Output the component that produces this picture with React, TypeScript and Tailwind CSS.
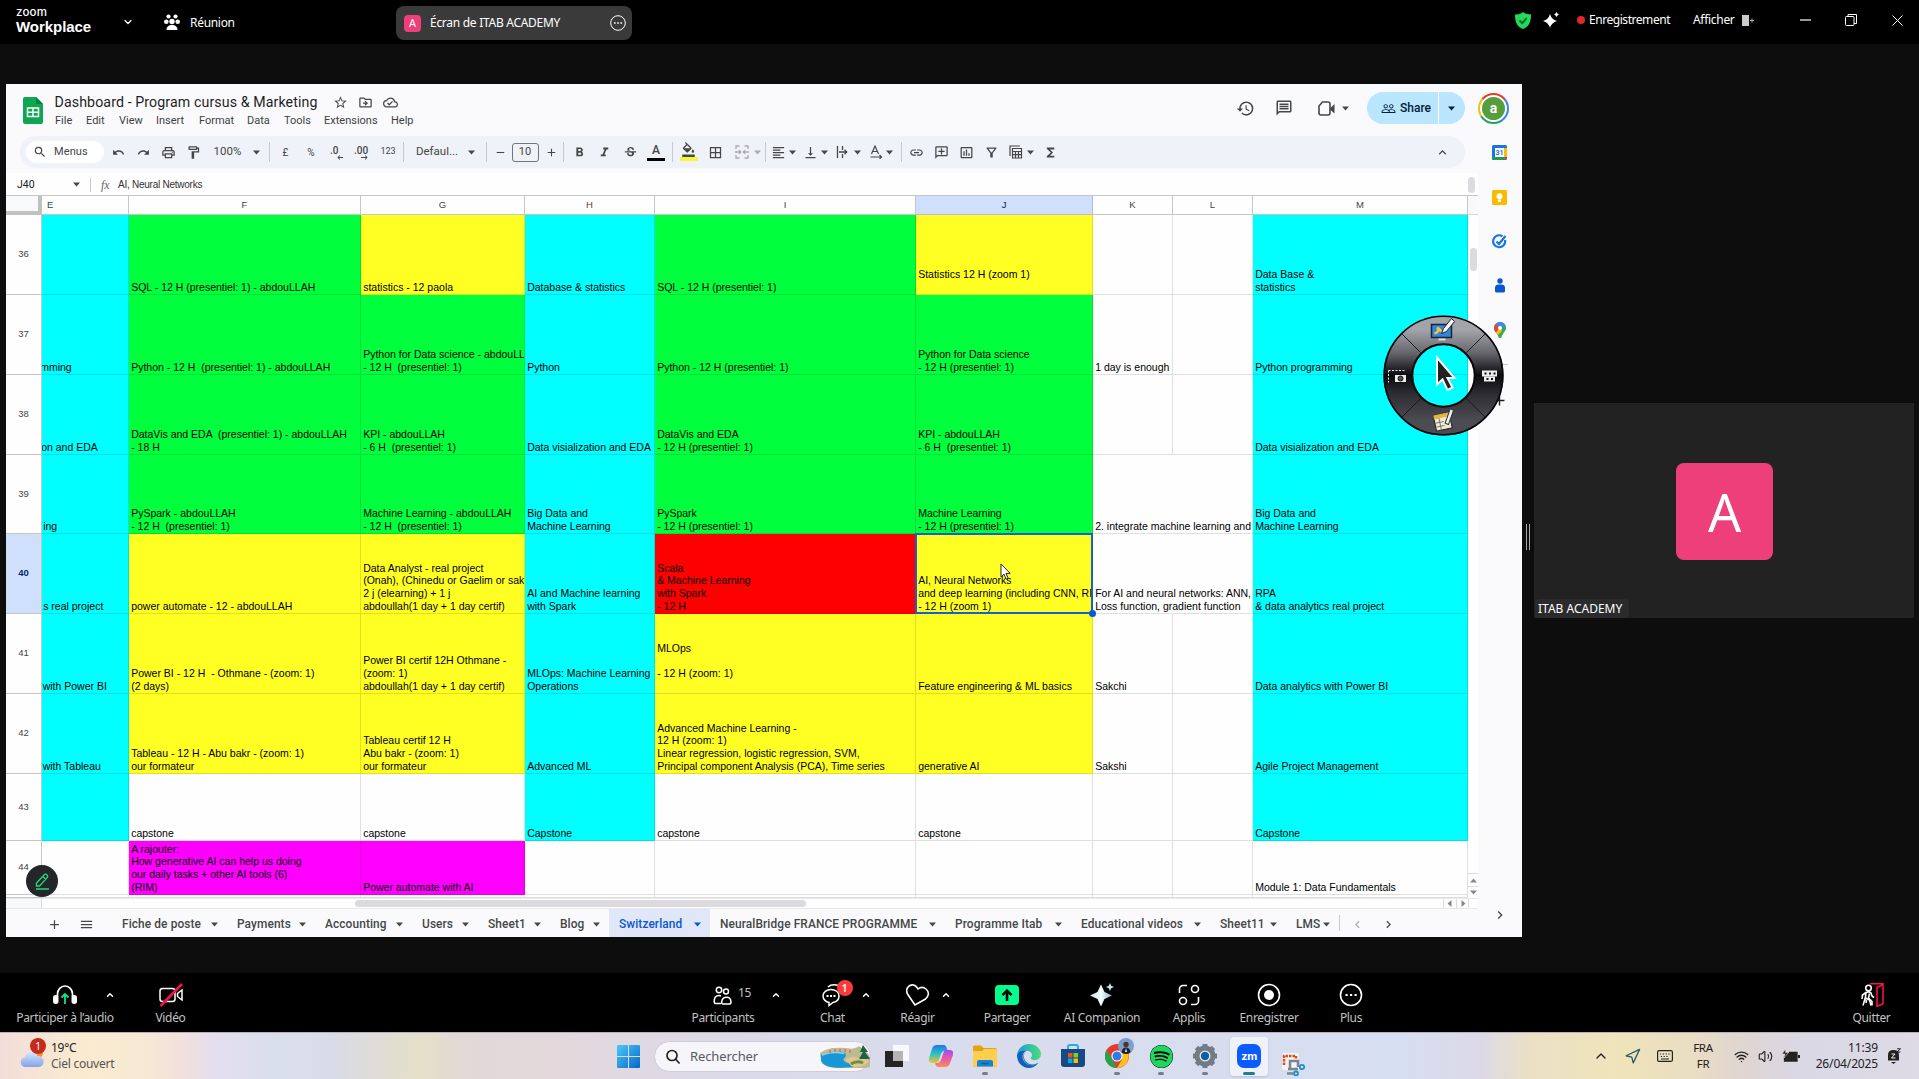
import React from "react";
import {
  MdSearch, MdUndo, MdRedo, MdOutlinePrint, MdOutlineFormatPaint, MdRemove, MdAdd,
  MdFormatBold, MdFormatItalic, MdStrikethroughS, MdFormatColorFill, MdBorderAll, MdFormatAlignLeft,
  MdVerticalAlignBottom, MdLink, MdOutlineAddComment, MdInsertChartOutlined, MdOutlineFilterAlt,
  MdFunctions, MdStarBorder, MdOutlineDriveFileMove, MdOutlineCloudDone, MdHistory, MdOutlineComment,
  MdPeopleOutline, MdMenu, MdChevronLeft, MdChevronRight, MdKeyboardArrowUp,
} from "react-icons/md";
import { FaSpotify } from "react-icons/fa";
import { ChevronDown, ChevronUp, Wifi, Volume2, Navigation } from "lucide-react";

type Kids = { children?: React.ReactNode };

const C = "bg-[#00ffff]";
const G = "bg-[#00ff3c]";
const Y = "bg-[#ffff24]";
const R = "bg-[#ff0000]";
const P = "bg-[#ff00ff]";
const W = "bg-[#fefefe]";

type CellData = { t?: string; bg: string; shift?: string; open?: boolean; selected?: boolean };
type RowData = { n: string; h: string; cells: CellData[] };

const rows: RowData[] = [
  { n: "36", h: "h-[80px]", cells: [
    { bg: C }, { bg: G, t: "SQL - 12 H (presentiel: 1) - abdouLLAH" }, { bg: Y, t: "statistics - 12 paola" },
    { bg: C, t: "Database & statistics" }, { bg: G, t: "SQL - 12 H (presentiel: 1)" },
    { bg: Y, t: "Statistics 12 H (zoom 1)\n " }, { bg: W }, { bg: W }, { bg: C, t: "Data Base &\nstatistics" } ] },
  { n: "37", h: "h-[80px]", cells: [
    { bg: C, t: "mming", shift: "-ml-[4px]" }, { bg: G, t: "Python - 12 H  (presentiel: 1) - abdouLLAH" },
    { bg: G, t: "Python for Data science - abdouLL\n- 12 H  (presentiel: 1)" }, { bg: C, t: "Python" },
    { bg: G, t: "Python - 12 H (presentiel: 1)" }, { bg: G, t: "Python for Data science\n- 12 H (presentiel: 1)" },
    { bg: W, t: "1 day is enough" }, { bg: W }, { bg: C, t: "Python programming" } ] },
  { n: "38", h: "h-[80px]", cells: [
    { bg: C, t: "on and EDA", shift: "-ml-[3px]" }, { bg: G, t: "DataVis and EDA  (presentiel: 1) - abdouLLAH\n- 18 H" },
    { bg: G, t: "KPI - abdouLLAH\n- 6 H  (presentiel: 1)" }, { bg: C, t: "Data visialization and EDA" },
    { bg: G, t: "DataVis and EDA\n- 12 H (presentiel: 1)" }, { bg: G, t: "KPI - abdouLLAH\n- 6 H  (presentiel: 1)" },
    { bg: W }, { bg: W }, { bg: C, t: "Data visialization and EDA" } ] },
  { n: "39", h: "h-[79px]", cells: [
    { bg: C, t: "ing", shift: "-ml-[1px]" }, { bg: G, t: "PySpark - abdouLLAH\n- 12 H  (presentiel: 1)" },
    { bg: G, t: "Machine Learning - abdouLLAH\n- 12 H  (presentiel: 1)" }, { bg: C, t: "Big Data and\nMachine Learning" },
    { bg: G, t: "PySpark\n- 12 H (presentiel: 1)" }, { bg: G, t: "Machine Learning\n- 12 H (presentiel: 1)" },
    { bg: W, t: "2. integrate machine learning and", open: true }, { bg: W }, { bg: C, t: "Big Data and\nMachine Learning" } ] },
  { n: "40", h: "h-[80px]", cells: [
    { bg: C, t: "s real project", shift: "-ml-[1px]" }, { bg: Y, t: "power automate - 12 - abdouLLAH" },
    { bg: Y, t: "Data Analyst - real project\n(Onah), (Chinedu or Gaelim or sak\n2 j (elearning) + 1 j\nabdoullah(1 day + 1 day certif)" },
    { bg: C, t: "AI and Machine learning\nwith Spark" }, { bg: R, t: "Scala\n& Machine Learning\nwith Spark\n- 12 H" },
    { bg: Y, t: "AI, Neural Networks\nand deep learning (including CNN, RN\n- 12 H (zoom 1)", selected: true },
    { bg: W, t: "For AI and neural networks: ANN,\nLoss function, gradient function", open: true }, { bg: W },
    { bg: C, t: "RPA\n& data analytics real project" } ] },
  { n: "41", h: "h-[80px]", cells: [
    { bg: C, t: "with Power BI", shift: "-ml-[1.5px]" }, { bg: Y, t: "Power BI - 12 H  - Othmane - (zoom: 1)\n(2 days)" },
    { bg: Y, t: "Power BI certif 12H Othmane -\n(zoom: 1)\nabdoullah(1 day + 1 day certif)" },
    { bg: C, t: "MLOps: Machine Learning\nOperations" }, { bg: Y, t: "MLOps\n \n- 12 H (zoom: 1)\n " },
    { bg: Y, t: "Feature engineering & ML basics" }, { bg: W, t: "Sakchi" }, { bg: W }, { bg: C, t: "Data analytics with Power BI" } ] },
  { n: "42", h: "h-[80px]", cells: [
    { bg: C, t: "with Tableau", shift: "-ml-[1.5px]" }, { bg: Y, t: "Tableau - 12 H - Abu bakr - (zoom: 1)\nour formateur" },
    { bg: Y, t: "Tableau certif 12 H\nAbu bakr - (zoom: 1)\nour formateur" }, { bg: C, t: "Advanced ML" },
    { bg: Y, t: "Advanced Machine Learning -\n12 H (zoom: 1)\nLinear regression, logistic regression, SVM,\nPrincipal component Analysis (PCA), Time series" },
    { bg: Y, t: "generative AI" }, { bg: W, t: "Sakshi" }, { bg: W }, { bg: C, t: "Agile Project Management" } ] },
  { n: "43", h: "h-[67px]", cells: [
    { bg: C }, { bg: W, t: "capstone" }, { bg: W, t: "capstone" }, { bg: C, t: "Capstone" }, { bg: W, t: "capstone" },
    { bg: W, t: "capstone" }, { bg: W }, { bg: W }, { bg: C, t: "Capstone" } ] },
  { n: "44", h: "h-[54px]", cells: [
    { bg: W }, { bg: P, t: "A rajouter:\nHow generative AI can help us doing\nour daily tasks + other AI tools (6)\n(RIM)" },
    { bg: P, t: "Power automate with AI" }, { bg: W }, { bg: W }, { bg: W }, { bg: W }, { bg: W }, { bg: W, t: "Module 1: Data Fundamentals" } ] },
  { n: "", h: "h-[3px]", cells: [
    { bg: W }, { bg: W }, { bg: W }, { bg: W }, { bg: W }, { bg: W }, { bg: W }, { bg: W }, { bg: W } ] },
];

const GRID = "grid grid-cols-[36px_87px_232px_164px_130px_261px_177px_80px_80px_215px]";

function Cell({ c }: { c: CellData }) {
  const z = c.selected ? "z-20" : c.open ? "z-10" : "overflow-hidden";
  const line = c.open ? "border-r-transparent" : "border-r-black/12";
  return (
    <div className={`relative flex min-w-0 items-end border-r border-b border-b-black/12 pb-[0.6px] pl-[2.2px] ${c.bg} ${z} ${line}`}>
      {c.t && (
        <div className={`whitespace-pre text-[10.5px] leading-[12.67px] text-black ${c.shift ?? ""} ${c.selected ? "w-[173px] overflow-hidden" : ""}`}>{c.t}</div>
      )}
      {c.selected && (
        <>
          <div className="absolute -top-px -right-px -bottom-px -left-px border-2 border-[#1660cf]" />
          <div className="absolute -right-1 -bottom-1 size-[7px] rounded-full bg-[#0b57d0]" />
          <svg className="absolute top-[29px] left-[84px] h-[18px] w-3" viewBox="0 0 12 18">
            <path d="M1 1v13l3-2.8 2.2 5 2-.9-2.2-4.9h4.2z" fill="#fff" stroke="#222" strokeWidth="1" />
          </svg>
        </>
      )}
    </div>
  );
}

function Spreadsheet() {
  return (
    <div className="w-[1462px] font-['Liberation_Sans',Arial,sans-serif]">
      <div className={`${GRID} h-5 border-t border-[#c4c7c5] text-center text-[9.5px] leading-[18px] text-[#444]`}>
        <div className="border-r-4 border-b-4 border-[#c0c0c1] bg-[#f8f9fa]" />
        <div className="border-r border-b border-[#c4c7c5] pl-[5px] text-left">E</div>
        {["F", "G", "H", "I"].map((l) => <div key={l} className="border-r border-b border-[#c4c7c5]">{l}</div>)}
        <div className="border-r border-b border-[#b9b4e0] bg-[#cfe0fc] text-[#041e49]">J</div>
        {["K", "L", "M"].map((l) => <div key={l} className="border-r border-b border-[#c4c7c5]">{l}</div>)}
      </div>
      {rows.map((r, i) => (
        <div key={i} className={`${GRID} ${r.h}`}>
          <div className={`flex items-center justify-center border-r border-b border-[#c4c7c5] text-[9.5px] ${r.n === "40" ? "bg-[#cfe0fc] font-bold text-[#0a2a66]" : "bg-[#fefefe] text-[#444]"}`}>{r.n}</div>
          {r.cells.map((c, j) => <Cell key={j} c={c} />)}
        </div>
      ))}
    </div>
  );
}

const Tri = ({ className = "" }: { className?: string }) => (
  <svg className={`h-[5px] w-[7px] shrink-0 ${className}`} viewBox="0 0 7 5"><path d="M0 .5h7L3.5 4.5z" fill="currentColor" /></svg>
);

const Slot = ({ w, children }: { w: string } & Kids) => (
  <div className={`flex h-full shrink-0 items-center justify-center ${w}`}>{children}</div>
);

const Sep = () => <div className="h-5 w-px bg-[#c7c9cc]" />;

function Toolbar() {
  return (
    <div className="ml-[14px] flex h-8 w-[1445px] items-center rounded-full bg-[#eff2f9] pl-[6px] text-[11px] text-[#444746]">
      <div className="flex h-[22px] w-[78px] items-center rounded-full bg-white pl-[7px]">
        <MdSearch className="size-[14px]" />
        <span className="ml-[7px] text-[11px] tracking-[0.1px]">Menus</span>
      </div>
      <Slot w="w-[27px]"><MdUndo className="ml-[1px] size-[13px]" /></Slot>
      <Slot w="w-[25px]"><MdRedo className="size-[13px]" /></Slot>
      <Slot w="w-[25px]"><MdOutlinePrint className="size-[15px]" /></Slot>
      <Slot w="w-[25px]"><MdOutlineFormatPaint className="size-[15px]" /></Slot>
      <Slot w="w-[43px]"><span className="text-[11.5px]">100%</span></Slot>
      <Slot w="w-[14px]"><Tri /></Slot>
      <Slot w="w-[13px]"><Sep /></Slot>
      <Slot w="w-[19px]"><span className="text-[10px]">£</span></Slot>
      <Slot w="w-[32px]"><span className="text-[10px]">%</span></Slot>
      <Slot w="w-[19px]">
        <svg className="size-4" viewBox="0 0 16 16"><text x="1" y="10" fontSize="10" fontWeight="500" fill="currentColor">.0</text><path d="M14 13.5H9m2-2-2.2 2L11 15.5" stroke="currentColor" fill="none" /></svg>
      </Slot>
      <Slot w="w-[31px]">
        <svg className="h-4 w-[18px]" viewBox="0 0 18 16"><text x="1" y="10" fontSize="10" fontWeight="500" fill="currentColor">.00</text><path d="M8 13.5h6m-2-2 2.2 2L12 15.5" stroke="currentColor" fill="none" /></svg>
      </Slot>
      <Slot w="w-[22px]"><span className="text-[9px]">123</span></Slot>
      <Slot w="w-[9px]"><Sep /></Slot>
      <Slot w="w-[58px]"><span className="text-[11.5px]">Defaul...</span></Slot>
      <Slot w="w-[14px]"><Tri className="mr-[3px]" /></Slot>
      <Slot w="w-[13px]"><Sep /></Slot>
      <Slot w="w-[14px]"><MdRemove className="size-[13px]" /></Slot>
      <Slot w="w-[36px]"><div className="flex h-[19px] w-[27px] items-center justify-center rounded-[3px] border border-[#747775]">10</div></Slot>
      <Slot w="w-[16px]"><MdAdd className="size-[13px]" /></Slot>
      <Slot w="w-[9px]"><Sep /></Slot>
      <Slot w="w-[22px]"><MdFormatBold className="size-[15px]" /></Slot>
      <Slot w="w-[28px]"><MdFormatItalic className="size-[15px]" /></Slot>
      <Slot w="w-[24px]"><MdStrikethroughS className="size-[15px]" /></Slot>
      <Slot w="w-[28px]">
        <div className="flex flex-col items-center"><span className="text-[12px] leading-[12px] font-medium">A</span><div className="mt-[2px] h-[3px] w-[18px] bg-black" /></div>
      </Slot>
      <Slot w="w-[4px]"><Sep /></Slot>
      <Slot w="w-[29px]">
        <div className="-mt-[2px] flex flex-col items-center"><MdFormatColorFill className="size-[15px]" /><div className="h-[4px] w-[18px] bg-[#f6f63a]" /></div>
      </Slot>
      <Slot w="w-[25px]"><MdBorderAll className="size-[15px]" /></Slot>
      <Slot w="w-[27px]">
        <svg className="size-[14px] text-[#a9abae]" viewBox="0 0 14 14" fill="none" stroke="currentColor" strokeWidth="1.3"><path d="M4.5 1H1v3m3.500 9H1v-3M9.500 1H13v3M9.500 13H13v-3M0 7h5.500M4 5.300 5.700 7 4 8.700M14 7H8.500M10 5.300 8.300 7 10 8.700" /></svg>
      </Slot>
      <Slot w="w-[4px]"><Tri className="text-[#a9abae]" /></Slot>
      <Slot w="w-[12px]"><Sep /></Slot>
      <Slot w="w-[14px]"><MdFormatAlignLeft className="size-[15px] shrink-0" /></Slot>
      <Slot w="w-[15px]"><Tri /></Slot>
      <Slot w="w-[20px]"><MdVerticalAlignBottom className="size-[15px]" /></Slot>
      <Slot w="w-[9px]"><Tri /></Slot>
      <Slot w="w-[26px]">
        <svg className="size-[14px]" viewBox="0 0 14 14" fill="none" stroke="currentColor" strokeWidth="1.3"><path d="M2.5 1v12M7.500 1v4M7.500 9v4M4 7h7.500M9.500 4.800 11.700 7 9.500 9.200" /></svg>
      </Slot>
      <Slot w="w-[5px]"><Tri /></Slot>
      <Slot w="w-[31px]">
        <svg className="size-[14px]" viewBox="0 0 14 14" fill="none" stroke="currentColor" strokeWidth="1.2"><path d="M2.500 9 6 1l3.500 8M3.700 6.500h4.600M1.500 12h11M10.500 10l2 2-2 2" /></svg>
      </Slot>
      <Slot w="w-[2px]"><Tri className="-ml-[5px]" /></Slot>
      <Slot w="w-[16px]"><Sep /></Slot>
      <Slot w="w-[14px]"><MdLink className="size-[15px] shrink-0" /></Slot>
      <Slot w="w-[36px]"><MdOutlineAddComment className="size-[15px] -scale-x-100" /></Slot>
      <Slot w="w-[14px]"><MdInsertChartOutlined className="size-[15px] shrink-0" /></Slot>
      <Slot w="w-[37px]"><MdOutlineFilterAlt className="size-[15px]" /></Slot>
      <Slot w="w-[11px]">
        <svg className="size-[14px] shrink-0" viewBox="0 0 14 14" fill="none" stroke="currentColor" strokeWidth="1.2"><path d="M1 11V1h10M3.500 3.500h9v9.500h-9zM3.500 6.500h9M3.500 9.700h9M6.500 6.500V13M9.500 6.500V13" /></svg>
      </Slot>
      <Slot w="w-[18px]"><Tri /></Slot>
      <Slot w="w-[22px]"><MdFunctions className="size-[15px]" /></Slot>
      <div className="flex-1" />
      <MdKeyboardArrowUp className="mr-[15px] size-[15px]" />
    </div>
  );
}

function TitleBar() {
  return (
    <div className="flex h-[52px] pl-[17px] text-[#1f1f1f]">
      <svg className="mt-[13px] h-[27px] w-5" viewBox="0 0 20 27">
        <path d="M2 0h11l7 7v18a2 2 0 0 1-2 2H2a2 2 0 0 1-2-2V2a2 2 0 0 1 2-2z" fill="#0da750" /><path d="M13 0l7 7h-7z" fill="#06833b" />
        <path d="M4.500 11h11v8.500h-11zM10 11v8.500M4.500 15.200h11" fill="none" stroke="#fff" strokeWidth="1.500" />
      </svg>
      <div className="ml-[11.500px] w-[900px] pt-[9px]">
        <div className="flex h-[19px] items-center">
          <span className="w-[278px] text-[14.2px] tracking-[0.1px] whitespace-nowrap">Dashboard - Program cursus &amp; Marketing</span>
          <div className="flex gap-[10px] text-[#444746]">
            <MdStarBorder className="size-[15px]" /><MdOutlineDriveFileMove className="size-[15px]" /><MdOutlineCloudDone className="size-[15px]" />
          </div>
        </div>
        <div className="flex h-[18px] items-center pt-px pl-[0.5px] text-[11px] text-[#3c3f3e]">
          <span className="w-[31px]">File</span><span className="w-[33px]">Edit</span><span className="w-[37px]">View</span>
          <span className="w-[43px]">Insert</span><span className="w-[48px]">Format</span><span className="w-[37px]">Data</span>
          <span className="w-[40px]">Tools</span><span className="w-[67px]">Extensions</span><span>Help</span>
        </div>
      </div>
      <div className="ml-auto flex h-12 items-center text-[#444746]">
        <MdHistory className="size-[19px]" />
        <MdOutlineComment className="ml-5 size-[18px] -scale-x-100" />
        <svg className="ml-[24px] size-[19px]" viewBox="0 0 19 19"><path d="M5.500 3H11q2 0 2 2v9q0 2-2 2H4q-2 0-2-2V7z" fill="none" stroke="currentColor" strokeWidth="1.6" /><path d="M13 9.500 17.500 5v9.500L13 10.500z" fill="currentColor" /></svg>
        <Tri className="ml-[6px]" />
        <div className="ml-[18px] flex h-8 w-[98px] items-center rounded-full bg-[#b9e5fd] text-[#001d35]">
          <MdPeopleOutline className="ml-[14px] size-[15px]" />
          <span className="ml-[4px] w-[38px] text-[12px] font-medium">Share</span>
          <div className="h-8 w-px bg-white" /><Tri className="ml-[9px]" />
        </div>
        <div className="mr-[13px] ml-[13px] flex size-[31px] items-center justify-center rounded-full bg-[conic-gradient(from_-50deg,#e33b2e_0_28%,#3b82f6_28%_55%,#1fa463_55%_80%,#f9bc15_80%)]">
          <div className="flex size-[27px] items-center justify-center rounded-full border-2 border-white bg-[#569d3c] text-[14px] font-bold text-white">a</div>
        </div>
      </div>
    </div>
  );
}

const tabs: { t: string; w: string; on?: boolean }[] = [
  { t: "Fiche de poste", w: "w-[115px]" }, { t: "Payments", w: "w-[88px]" }, { t: "Accounting", w: "w-[97px]" },
  { t: "Users", w: "w-[66px]" }, { t: "Sheet1", w: "w-[72px]" }, { t: "Blog", w: "w-[59px]" },
  { t: "Switzerland", w: "w-[101px]", on: true }, { t: "NeuralBridge FRANCE PROGRAMME", w: "w-[235px]" },
  { t: "Programme Itab", w: "w-[126px]" }, { t: "Educational videos", w: "w-[139px]" }, { t: "Sheet11", w: "w-[76px]" }, { t: "LMS", w: "w-[53px]" },
];

function SheetTabs() {
  return (
    <div className="flex h-[28px] items-stretch bg-[#fafafd] pl-[41px] text-[#444746]">
      <div className="flex w-[65px] items-center pt-[2px]"><MdAdd className="size-[15px]" /><MdMenu className="ml-[17px] size-[15px]" /></div>
      {tabs.map((t) => (
        <div key={t.t} className={`flex shrink-0 items-center justify-between pt-[3px] pr-[9px] pl-[10px] text-[11.9px] font-medium tracking-[0.1px] whitespace-nowrap ${t.w} ${t.on ? "bg-[#dfe7f8] font-bold text-[#0b57d0]" : ""}`}>
          {t.t}<Tri />
        </div>
      ))}
      <div className="my-[6px] w-px bg-[#c7c9cc]" />
      <div className="flex items-center pt-[2px]"><MdChevronLeft className="ml-[10px] size-[15px] text-[#a9abae]" /><MdChevronRight className="ml-[16px] size-[15px]" /></div>
    </div>
  );
}

function SidePanel() {
  return (
    <div className="flex w-11 flex-col items-center bg-[#fafafd] pr-[1px]">
      <svg className="mt-[9px] size-[15px]" viewBox="0 0 15 15">
        <rect width="15" height="15" rx="1.5" fill="#1a73e8" /><path d="M12 3h3v9h-3z" fill="#fbbc04" /><path d="M0 12h12v3H1.500A1.500 1.500 0 0 1 0 13.500z" fill="#1e9e4a" /><path d="M12 12h3l-3 3z" fill="#ea4335" />
        <rect x="3" y="3" width="9" height="9" fill="#fff" /><text x="7.5" y="10" fontSize="7" fontWeight="700" textAnchor="middle" fill="#1a73e8">31</text>
      </svg>
      <svg className="mt-[30px] size-[15px]" viewBox="0 0 15 15"><rect width="15" height="15" rx="1.5" fill="#fdb900" /><circle cx="7.5" cy="6.3" r="3" fill="#fff" /><path d="M6 9.500h3v2.500H6z" fill="#fff" /></svg>
      <svg className="mt-[29px] size-[15px]" viewBox="0 0 15 15" fill="none"><path d="M10.500 2.300A6 6 0 1 0 13 6" stroke="#1a73e8" strokeWidth="2.2" /><path d="M4.500 7.500 7 10l6.500-8" stroke="#1a73e8" strokeWidth="2.2" /></svg>
      <svg className="mt-[29px] h-[15px] w-3" viewBox="0 0 12 15"><circle cx="6" cy="3" r="2.7" fill="#0b57d0" /><path d="M1 9a3 3 0 0 1 3-2.500h4A3 3 0 0 1 11 9v4a1.500 1.500 0 0 1-1.500 1.500h-7A1.500 1.500 0 0 1 1 13z" fill="#0b57d0" /></svg>
      <svg className="mt-[29px] h-[16px] w-3" viewBox="0 0 12 16">
        <path d="M6 0a6 6 0 0 1 6 6c0 3.500-3.500 5-4.500 9.200Q6 17 4.500 15.200C3.500 11 0 9.500 0 6a6 6 0 0 1 6-6z" fill="#34a853" /><path d="M6 0a6 6 0 0 1 5.700 4.100L6 6 1.500 2A6 6 0 0 1 6 0z" fill="#4285f4" /><path d="M1.500 2 6 6 2 10.400A6 6 0 0 1 1.500 2z" fill="#ea4335" /><path d="M2 10.400 6 6l2 3-4 4z" fill="#fbbc04" /><circle cx="6" cy="6" r="2" fill="#fff" />
      </svg>
      <div className="mt-[26px] h-px w-4 bg-[#c7c9cc]" />
      <MdAdd className="mt-[27px] size-[17px] text-[#222]" />
      <MdChevronRight className="mt-auto mb-[14px] size-4 text-[#444746]" />
    </div>
  );
}

function RadialMenu() {
  return (
    <svg className="absolute top-[315px] left-[1383px] z-30 size-[121px]" viewBox="-60.5 -60.5 121 121">
      <defs>
        <linearGradient id="ring" x1="0" y1="0" x2="0" y2="1">
          <stop offset="0" stopColor="#a3a3aa" /><stop offset=".25" stopColor="#66666d" /><stop offset=".42" stopColor="#26262b" /><stop offset=".5" stopColor="#0b0b0e" /><stop offset=".7" stopColor="#2d2d32" /><stop offset="1" stopColor="#4c4c53" />
        </linearGradient>
      </defs>
      <circle r="45.5" fill="none" stroke="url(#ring)" strokeWidth="29" />
      <circle r="59.3" fill="none" stroke="#08080a" strokeWidth="1.6" />
      <circle r="31.2" fill="none" stroke="#08080a" strokeWidth="2" />
      <path d="M-42-42-23-23M42-42 23-23M-42 42-23 23M42 42 23 23" stroke="#1a1a1e" />
      <g><rect x="-12" y="-51" width="20" height="13" fill="#3487d8" stroke="#12263a" strokeWidth="1.5" /><path d="M-9-42q5-1 3-6l4 4" stroke="#f3c34a" strokeWidth="2.5" fill="none" /><path d="M-5-37h7v2h-7z" fill="#ddd" /><path d="M-2-42 0-47 8-57l3 3-8 10z" fill="#f5f5f5" stroke="#222" /></g>
      <path d="M-55-5h16M-55-5V7" stroke="#eee" strokeDasharray="2 1.5" fill="none" />
      <rect x="-49" y="-1" width="12" height="8" fill="#eee" stroke="#111" /><circle cx="-43" cy="3" r="2.5" fill="#555" stroke="#111" />
      <rect x="38.5" y="-5" width="15" height="6" fill="#eee" /><rect x="40.5" y="1" width="11" height="5" fill="#eee" /><path d="M41-2h2m2.500 0h2m2.500 0h2M43 3.500h2m2.500 0h2" stroke="#111" strokeWidth="2" />
      <g transform="rotate(-12 0 45)"><rect x="-9" y="38" width="16" height="16" fill="#f1ead2" stroke="#222" /><path d="M-9 38H7v4H-9z" fill="#e0b541" /><path d="M-9 46H0M-9 50H0M-4 42v12" stroke="#666" strokeWidth=".8" /><path d="m1 48 8-13 3 2-8 13z" fill="#eee" stroke="#333" /></g>
      <path d="M-6.500-18V9l5.500-5 5 10.500 5-2.500-5-9.500H11z" fill="#222" stroke="#fff" strokeWidth="2" />
    </svg>
  );
}

function SharedScreen() {
  return (
    <div className="relative mt-10 ml-[6px] flex h-[853px] w-[1516px] shrink-0 flex-col bg-[#fafafd] font-[Roboto,sans-serif]">
      <TitleBar />
      <div className="flex flex-1">
        <div className="flex w-[1472px] flex-col">
          <Toolbar />
          <div className="mt-[5px] flex h-[22px] items-center bg-[#fefefe] pt-px pl-[11px] text-[10.5px] text-[#222]">
            <span className="w-[56px]">J40</span><Tri className="text-[#444]" />
            <div className="ml-[10px] h-[14px] w-px bg-[#c7c9cc]" />
            <span className="ml-[10px] w-[17px] font-['Liberation_Serif',serif] text-[12px] text-[#666] italic">fx</span>
            <span className="font-['Liberation_Sans',sans-serif] text-[10px] tracking-[-0.25px] text-[#333]">AI, Neural Networks</span>
            <div className="mr-[3px] ml-auto h-4 w-[7px] rounded-full bg-[#dadce0]" />
          </div>
          <div className="flex bg-[#fefefe]">
            <Spreadsheet />
            <div className="flex w-[10px] flex-col items-center border-t border-[#c4c7c5] text-[#888]">
              <div className="h-[19px] w-full border-b border-[#d5d5d5] bg-[#f8f9fa]" />
              <div className="mt-[33px] h-[23px] w-[7px] rounded-full bg-[#dadadf]" />
              <div className="mt-auto flex h-[13px] w-full items-center justify-center border-t border-[#ddd]"><Tri className="h-[3px] w-[4px] rotate-180" /></div>
              <div className="flex h-[12px] w-full items-center justify-center border-t border-[#ddd]"><Tri className="h-[3px] w-[4px]" /></div>
            </div>
          </div>
          <div className="flex h-[11px] items-center border-y border-[#e8e8ea] bg-[#fefefe]">
            <div className="h-full w-9 border-r border-[#ddd] bg-[#f8f9fa]" />
            <div className="ml-[313px] h-[7px] w-[451px] rounded-full bg-[#dadadf]" />
            <div className="mr-[9px] ml-auto flex h-full w-[26px] items-center justify-around border-x border-[#ddd] text-[#888]">
              <Tri className="h-[3px] w-[5px] rotate-90" /><div className="h-full w-px bg-[#ddd]" /><Tri className="h-[3px] w-[5px] -rotate-90" />
            </div>
          </div>
          <SheetTabs />
        </div>
        <SidePanel />
      </div>
      <div className="absolute top-[781px] left-5 z-30 flex size-8 items-center justify-center rounded-full bg-[#252629]">
        <svg className="size-[17px]" viewBox="0 0 17 17" fill="none" stroke="#1fd97c" strokeWidth="1.3"><path d="M2.500 13V10L10 2a1.800 1.800 0 0 1 3 0 1.800 1.800 0 0 1 0 2.800L5.500 13zM8.800 3.500l3 3M2 16h13" /></svg>
      </div>
    </div>
  );
}

function TopBar() {
  return (
    <div className="flex h-11 shrink-0 items-center bg-black text-[12px] text-white">
      <div className="w-[106px] pb-[3px] pl-4 leading-none">
        <div className="font-[Inter,sans-serif] text-[11.5px] leading-[10px] font-medium tracking-[0.2px]">zoom</div>
        <div className="mt-[2px] font-['Liberation_Sans',sans-serif] text-[15px] leading-[16px] font-bold tracking-[-0.05px]">Workplace</div>
      </div>
      <ChevronDown className="ml-[16px] size-3" strokeWidth={2.5} />
      <svg className="ml-[30px] h-[17px] w-4" viewBox="0 0 16 17" fill="#fff">
        <circle cx="4.5" cy="2.5" r="2.1" /><circle cx="11.5" cy="2.5" r="2.1" /><circle cx="2.3" cy="7.8" r="2.3" /><circle cx="13.7" cy="7.8" r="2.3" /><circle cx="8" cy="7.5" r="2.7" /><path d="M2.500 16c0-3.500 2.200-5 5.500-5s5.500 1.500 5.500 5z" />
      </svg>
      <span className="ml-[10px] w-[206px] pt-px tracking-[-0.3px]">Réunion</span>
      <div className="mt-[2px] flex h-[34px] w-[236px] items-center rounded-lg bg-[#3a3a3a] pl-2">
        <div className="flex h-[17px] w-[17px] items-center justify-center rounded-[4px] bg-[#ed3f7a] text-[11px]">A</div>
        <span className="ml-[9px] w-[180px] tracking-[-0.28px]">Écran de ITAB ACADEMY</span>
        <svg className="size-4" viewBox="0 0 16 16" fill="none" stroke="#fff"><circle cx="8" cy="8" r="7.3" /><path d="M4 8h1.600M7.200 8h1.600M10.400 8H12" strokeWidth="1.6" /></svg>
      </div>
      <div className="ml-auto flex items-center pb-1">
        <svg className="h-[17px] w-4" viewBox="0 0 16 17"><path d="M8 0c2 2 5 2.500 8 2.500 0 7-1.500 12-8 14.500C1.500 14.500 0 9.500 0 2.500 3 2.500 6 2 8 0z" fill="#23d959" /><path d="m4.500 8.500 2.700 2.600 4.500-5" fill="none" stroke="#063" strokeWidth="1.8" /></svg>
        <svg className="ml-[12px] size-4" viewBox="0 0 16 16" fill="#fff"><path d="M7 2q1.500 5.500 7 7-5.500 1.500-7 7-1.500-5.500-7-7 5.500-1.500 7-7zM13.500 0q.6 1.900 2.500 2.500-1.900.6-2.500 2.500-.6-1.900-2.500-2.500Q12.900 1.900 13.500 0z" /></svg>
        <div className="ml-[18px] size-2 rounded-full bg-[#e02828]" />
        <span className="ml-1 w-[104px] tracking-[-0.45px]">Enregistrement</span>
        <span className="w-[49px] tracking-[-0.3px]">Afficher</span>
        <svg className="h-[11px] w-3" viewBox="0 0 12 11"><path d="M0 0h7v11H0z" fill="#ccc" /><path d="M8 5.500h4M10 3.500v4" stroke="#aaa" /></svg>
        <div className="ml-[46px] h-[2px] w-[11px] bg-[#999]" />
        <svg className="ml-[34px] size-3" viewBox="0 0 12 12" fill="none" stroke="#fff"><rect x=".5" y="2.5" width="8.5" height="9" rx="1" /><path d="M3 2.500V.5h8.500V9.500H9" /></svg>
        <svg className="mr-[16px] ml-[35px] size-[11px]" viewBox="0 0 11 11" stroke="#fff"><path d="m.5.5 10 10m0-10-10 10" /></svg>
      </div>
    </div>
  );
}

function Action({ w, label, children, extra }: { w: string; label: string; extra?: React.ReactNode } & Kids) {
  return (
    <div className={`flex shrink-0 flex-col items-center pt-[10px] ${w}`}>
      <div className="grid h-6 w-full grid-cols-[1fr_auto_1fr] items-center"><div /><div className="relative">{children}</div><div className="flex items-center">{extra}</div></div>
      <div className="mt-[3px] text-[12px] leading-[16px] tracking-[-0.32px] whitespace-nowrap text-[#c2c2c2]">{label}</div>
    </div>
  );
}

const Caret = ({ className }: { className: string }) => <ChevronUp className={`size-[10px] shrink-0 ${className}`} strokeWidth={3.5} />;

function MeetingBar() {
  return (
    <div className="mt-auto flex h-[59px] shrink-0 bg-black text-white">
      <Action w="w-[130px]" label="Participer à l’audio" extra={<Caret className="ml-[28px]" />}>
        <svg className="size-6" viewBox="0 0 24 24" fill="none"><path d="M4.500 14V11a7.500 8 0 0 1 15 0v3" stroke="#fff" strokeWidth="1.7" /><rect x="0" y="12" width="5.5" height="9" rx="2.7" fill="#fff" /><rect x="18.5" y="12" width="5.5" height="9" rx="2.7" fill="#fff" /><path d="M12 21V11M8.500 14.500 12 11l3.500 3.500" stroke="#0be58a" strokeWidth="1.8" /></svg>
      </Action>
      <Action w="w-[81px]" label="Vidéo">
        <svg className="size-6" viewBox="0 0 24 24" fill="none" stroke="#fff" strokeWidth="1.5"><rect x="1" y="5.5" width="15" height="13" rx="2.5" /><path d="m18.500 10.500 4.500-3.500v10l-4.500-3.500z" /><path d="M1.500 23 23 1" stroke="#f5104f" strokeWidth="2.6" /></svg>
      </Action>
      <div className="w-[452px]" />
      <Action w="w-[120px]" label="Participants" extra={<><span className="-mt-[4px] ml-[5px] w-[24px] text-[12px] tracking-[-0.3px] text-[#c2c2c2]">15</span><Caret className="ml-[9px]" /></>}>
        <svg className="h-[19px] w-5" viewBox="0 0 20 19" fill="none" stroke="#fff" strokeWidth="1.5"><circle cx="6" cy="4" r="2.7" /><circle cx="13" cy="5.5" r="2.5" /><path d="M8 17.500H3A1.800 1.800 0 0 1 1.200 15.700C1.200 12 3 9.500 6 9.500q1.200 0 2 .5M10 18h6q2 0 2-1.800c0-3-1.700-5-4.500-5S9 13 8.700 15.700Q8.600 18 10 18z" /></svg>
      </Action>
      <Action w="w-[99px]" label="Chat" extra={<Caret className="ml-[16px]" />}>
        <svg className="size-6" viewBox="0 0 24 24" fill="none" stroke="#fff" strokeWidth="1.5"><path d="M7 4c3-3 9-3 13 0M10 6.500c4.500 0 8 2.500 8 6.500s-3 6-6 6.500l-4 3v-3c-3-.5-6-3-6-6.500s3.500-6.500 8-6.500z" /><path d="M5.500 13h2M9 13h2M12.500 13h2" strokeWidth="2" /></svg>
        <div className="absolute -top-[3px] left-[16px] flex h-4 w-4 items-center justify-center rounded-full bg-[#fb3b3b] text-[10px] font-semibold">1</div>
      </Action>
      <Action w="w-[71px]" label="Réagir" extra={<Caret className="ml-[11px]" />}>
        <svg className="size-6" viewBox="0 0 24 24" fill="none" stroke="#fff" strokeWidth="1.6"><path d="M9 22 1.500 11C-1 6 3 1 7.500 2c2 .4 3.500 2 4.500 4 2.500-2 5.500-2 8 0 3.500 3 3 7-.5 10z" /></svg>
      </Action>
      <Action w="w-[108px]" label="Partager">
        <div className="my-[2px] flex h-5 w-6 items-center justify-center rounded-[4px] bg-[#00ff8c]"><svg className="size-3" viewBox="0 0 12 12" fill="none" stroke="#000" strokeWidth="2.6"><path d="M6 12V1.500M1.500 6.200 6 1.700l4.500 4.500" /></svg></div>
      </Action>
      <Action w="w-[82px]" label="AI Companion">
        <svg className="size-6" viewBox="0 0 24 24"><defs><linearGradient id="gem" x1="0" x2="1"><stop offset="0" stopColor="#c3e6ec" /><stop offset=".5" stopColor="#f3ffff" /><stop offset="1" stopColor="#83aeb8" /></linearGradient></defs><path d="M11 1.500 14.500 9 22 12.500 14.500 16 11 23.500 7.500 16 0 12.500 7.500 9z" fill="url(#gem)" /><path d="M20 0l1.200 2.800L24 4l-2.800 1.200L20 8l-1.200-2.800L16 4l2.800-1.200z" fill="#bfe6ee" /></svg>
      </Action>
      <Action w="w-[92px]" label="Applis">
        <svg className="size-[22px]" viewBox="0 0 22 22" fill="none" stroke="#fff" strokeWidth="1.6"><path d="M9 1.500H5A3.500 3.500 0 0 0 1.500 5v4M13 20.500h4a3.500 3.500 0 0 0 3.500-3.500v-4" /><circle cx="17" cy="5" r="3.5" /><circle cx="5" cy="17" r="3.5" /></svg>
      </Action>
      <Action w="w-[68px]" label="Enregistrer">
        <svg className="size-6" viewBox="0 0 24 24"><circle cx="12" cy="12" r="10.5" fill="none" stroke="#fff" strokeWidth="1.6" /><circle cx="12" cy="12" r="5" fill="#fff" /></svg>
      </Action>
      <Action w="w-[96px]" label="Plus">
        <svg className="size-6" viewBox="0 0 24 24" fill="none" stroke="#fff"><circle cx="12" cy="12" r="10.5" strokeWidth="1.6" /><path d="M6.500 12h2.200M11 12h2.200M15.500 12h2.200" strokeWidth="2.2" /></svg>
      </Action>
      <div className="flex-1" />
      <Action w="w-[95px]" label="Quitter">
        <svg className="size-6" viewBox="0 0 24 24" fill="none" stroke="#fff" strokeWidth="1.6"><circle cx="8.500" cy="5" r="2.800" /><path d="M6 9.500 2.500 12l-.5 4M6 9.500q3-1.500 5 .5l1 3 2 1.500M6 9.500 5.500 14 3 22.500M5.500 15l4 2 1.500 5.500M9.500 10.500 8.500 15l3.500 3.500v4M6.500 17 6 20" /><path d="M10 .8h13v20L17 23.500V4.500L23 1.500" stroke="#f5104f" /></svg>
      </Action>
    </div>
  );
}

const TaskApp = ({ children, dot = true, on = false }: { dot?: boolean; on?: boolean } & Kids) => (
  <div className="flex w-[44px] shrink-0 justify-center pt-1">
    <div className={`flex h-[39px] w-[38px] flex-col items-center rounded ${on ? "bg-white/60 shadow-sm" : ""}`}>
      <div className="relative mt-[7px] size-6">{children}</div>
      {dot && <div className={`mt-[4px] h-[3px] rounded-full ${on ? "w-3 bg-[#1e7f8f]" : "w-[6px] bg-[#7d7d86]"}`} />}
    </div>
  </div>
);

function Taskbar() {
  return (
    <div className="flex h-[47px] shrink-0 border-t border-[#b9b0bc] bg-[linear-gradient(90deg,#f3ddd9_0px,#faebd0_80px,#f8e9d3_140px,#f2e1dc_180px,#e4deee_215px,#dadfec_270px,#d9dbe8_330px,#e4dfc8_420px,#e2d8d8_470px,#e4d8dc_560px,#ddd9e6_680px,#dadbeb_800px,#d6def1_1400px,#dcd9e8_1480px,#ebe0c4_1530px,#efe4b9_1620px,#e8dcc4_1700px,#dfd5d2_1745px,#d9d8e4_1800px,#dedae6_1919px)] text-[#222]">
      <div className="flex w-[613px]">
        <div className="relative mt-3 ml-5 size-6">
          <svg className="size-6" viewBox="0 0 24 24"><defs><linearGradient id="cl" x1="0" y1="0" x2="0" y2="1"><stop offset="0" stopColor="#d8e6fb" /><stop offset="1" stopColor="#7fa3e6" /></linearGradient></defs><circle cx="18" cy="8" r="5" fill="#f79018" /><path d="M5 22a5 5 0 0 1-.3-9.800A7 7 0 0 1 17.800 11a5.500 5.500 0 0 1 .7 11z" fill="url(#cl)" /></svg>
          <div className="absolute -top-[7px] left-[10px] flex size-4 items-center justify-center rounded-full bg-[#c42b1c] text-[10px] text-white">1</div>
        </div>
        <div className="ml-[7px] pt-[7px] text-[12px] leading-4 tracking-[-0.25px]"><div className="tracking-[-0.3px]">19°C</div><div className="text-[#555]">Ciel couvert</div></div>
      </div>
      <svg className="mt-3 ml-1 size-[23px]" viewBox="0 0 23 23"><defs><linearGradient id="win" x1="0" y1="0" x2="1" y2="1"><stop offset="0" stopColor="#4cc9f8" /><stop offset="1" stopColor="#0468c9" /></linearGradient></defs><path d="M0 1q0-1 1-1h10v11H0zM12 0h10q1 0 1 1v10H12zM0 12h11v11H1q-1 0-1-1zM12 12h11v10q0 1-1 1H12z" fill="url(#win)" /></svg>
      <div className="mt-2 ml-[14px] flex h-[31px] w-[217px] items-center rounded-full border border-[#d0cdd8] bg-[#f5f5fa] pl-[10px]">
        <svg className="size-4" viewBox="0 0 16 16" fill="none" stroke="#222" strokeWidth="1.7"><circle cx="7" cy="6.5" r="5" /><path d="m10.500 10 4 4.500" /></svg>
        <span className="ml-[9px] w-[130px] text-[13px] tracking-[-0.1px] text-[#5a5a60]">Rechercher</span>
        <svg className="h-[23px] w-[50px]" viewBox="0 0 50 23">
          <path d="M0 8Q8 3 16 3l14 1q7-1 9-3l5 4q5 3 6 8v9q-8 2-14 1-24 1-30-2Q0 17 0 8z" fill="#b7bd8e" />
          <path d="M1 10c7-4 24-5 25 0 0 3-4 3-2 6 3 2 9 2 9 6Q5 25 1 16z" fill="#1796d8" />
          <path d="M2 10q11-4 22-1.500" stroke="#86d8f4" strokeWidth="1.5" fill="none" />
          <path d="M3 6.500Q12 1 30 3.500l6 3-2 3Q22 4 4 9z" fill="#cdb497" /><path d="M10 5v3M15 4v3M20 4v3M25 4v3M30 5v3" stroke="#8f7458" strokeWidth="1" />
          <path d="M26 14q6-4 12-1 6 0 8-2l3 6-6 4q-8 2-12 0-1-3-5-4z" fill="#e0c491" /><path d="M31 19q6-4 12-1" stroke="#6a9340" strokeWidth="3" fill="none" />
          <path d="m43 0 5 7h-3l5 7H39l4-7h-3z" fill="#1f5f43" />
        </svg>
      </div>
      <div className="ml-[4px] flex">
        <TaskApp dot={false}><svg viewBox="0 0 24 24"><rect x="8" y="1" width="16" height="16" fill="#f9f9fb" /><rect x="0" y="7" width="18" height="16" fill="#252525" /><rect x="8" y="7" width="10" height="10" fill="#b4b4b4" /></svg></TaskApp>
        <TaskApp dot={false}>
          <svg viewBox="0 0 24 24"><defs><linearGradient id="cp1" x1="0" y1="0" x2="0" y2="1"><stop offset="0" stopColor="#1c78ee" /><stop offset=".5" stopColor="#2bc3c0" /><stop offset="1" stopColor="#f5c32c" /></linearGradient><linearGradient id="cp2" x1="0" y1="0" x2="0" y2="1"><stop offset="0" stopColor="#a34cf0" /><stop offset=".6" stopColor="#f0609a" /><stop offset="1" stopColor="#fb8f4c" /></linearGradient></defs>
            <path d="M8 1h7q2 0 3 4l1 2h-4q-2 0-3 3l-2 6q-1 3-3 3H3q-4 0-3-5L3 5q1-4 5-4z" fill="url(#cp1)" /><path d="M16 23H9q-2 0-3-4H9q2 0 3-3l2-6q1-4 3-4h4q4 0 3 5l-3 8q-1 4-5 4z" fill="url(#cp2)" /></svg>
        </TaskApp>
        <TaskApp><svg viewBox="0 0 24 24"><path d="M0 3q0-1.500 1.500-1.500H8L10.500 4H22q2 0 2 2v15q0 1.500-1.500 1.500h-21Q0 22.500 0 21z" fill="#e3a30f" /><path d="M0 7h9l2-2h11.500Q24 5 24 6.500V21q0 1.500-1.500 1.500h-21Q0 22.500 0 21z" fill="#fdcf4e" /><path d="M4 18q0-2 2-2h12q2 0 2 2v4.500H4z" fill="#1783d5" /><path d="M8 19.500h8" stroke="#0b5fa8" strokeWidth="1.5" /></svg></TaskApp>
        <TaskApp dot={false}>
          <svg viewBox="0 0 24 24"><defs><linearGradient id="ed" x1="0" y1="0" x2="1" y2="0"><stop offset="0" stopColor="#1c9de0" /><stop offset="1" stopColor="#4fdc75" /></linearGradient></defs><path d="M0 11C1 4 6 0 12 0c7 0 12 5 12 10 0 4-3 6-6 6-3.500 0-5-1.300-4-2.500 2-2 1-6-3-6.500C6 6.500 1 8 0 11z" fill="url(#ed)" /><path d="M0 11C1 7.500 5 6 9 7c-3 1.500-4 5-3 8 1 4 6 7 10 6l4.500-1.500C18 23 15 24 12 24 5 24 0 18.500 0 11z" fill="#0f62b8" /><path d="M9 7c-3 3-3 8 1 11.500 3 2.500 8 2.500 11.500 0-2 4-6 4-9.500 2.500C6 19 4 11 9 7z" fill="#1b7fd1" /></svg>
        </TaskApp>
        <TaskApp dot={false}><svg viewBox="0 0 24 24"><path d="M7 5V3q0-2 2-2h6q2 0 2 2v2" fill="none" stroke="#2aa8e8" strokeWidth="2" /><path d="M0 5h24v15q0 3-3 3H3q-3 0-3-3z" fill="#164a80" /><path d="M7 9h4.500v4.500H7z" fill="#f1511b" /><path d="M12.500 9H17v4.500h-4.500z" fill="#80cc28" /><path d="M7 14.500h4.500V19H7z" fill="#00adef" /><path d="M12.500 14.500H17V19h-4.500z" fill="#fbbc09" /></svg></TaskApp>
        <TaskApp>
          <svg viewBox="0 0 24 24"><circle cx="12" cy="12" r="12" fill="#e53a2c" /><path d="M1.600 6 7 15l5 9A12 12 0 0 1 1.600 6z" fill="#25a54b" /><path d="M22.400 6.500H12l5 9L12 24A12 12 0 0 0 22.400 6.500z" fill="#fcc31a" /><circle cx="12" cy="12" r="5.6" fill="#fff" /><circle cx="12" cy="12" r="4.5" fill="#2f7bea" /></svg>
          <svg className="absolute -top-[6px] left-[13px] size-4" viewBox="0 0 16 16"><circle cx="8" cy="8" r="8" fill="#7d9fd0" /><path d="M3.500 14.500q.5-5 4.500-5t4.500 5q-4.500 3-9 0z" fill="#20242c" /><circle cx="8" cy="6.5" r="2.7" fill="#4b3628" /><path d="m8 10 1 4H7z" fill="#eee" /></svg>
        </TaskApp>
        <TaskApp><div className="flex size-6 items-center justify-center"><FaSpotify className="size-[23px] rounded-full bg-black text-[#1ed760]" /></div></TaskApp>
        <TaskApp>
          <svg viewBox="0 0 24 24"><circle cx="12" cy="12" r="8" fill="none" stroke="#737b85" strokeWidth="5" /><path d="M12 0v4M12 20v4M0 12h4M20 12h4M3.500 3.500l3 3M17.500 17.500l3 3M3.500 20.500l3-3M17.500 6.500l3-3" stroke="#737b85" strokeWidth="5" /><circle cx="12" cy="12" r="5" fill="#eef2f8" /><circle cx="12" cy="12" r="4.2" fill="#0f5ea8" /></svg>
        </TaskApp>
        <TaskApp on><div className="flex size-6 items-center justify-center rounded-[7px] bg-[#0b5cff] font-[Inter,sans-serif] text-[11px] font-bold tracking-[-0.3px] text-white">zm</div></TaskApp>
        <TaskApp dot={false}>
          <svg className="mt-2 size-6" viewBox="0 0 24 24"><rect x="1" y="1" width="17" height="17" rx="2" fill="#f4f4f6" /><path d="M3 13V4h12v3" fill="none" stroke="#dc4a1d" strokeWidth="2.5" strokeDasharray="2.5 1" /><path d="M9 18V9h8v6M7 17h10M6 21.500h6" fill="none" stroke="#7d848c" strokeWidth="2.5" /><circle cx="21" cy="15" r="2.2" fill="none" stroke="#1b8fd0" strokeWidth="1.8" /><circle cx="15" cy="21.5" r="2" fill="none" stroke="#1b8fd0" strokeWidth="1.8" /></svg>
        </TaskApp>
      </div>
      <div className="ml-auto flex items-center pr-[18px]">
        <ChevronUp className="size-4" strokeWidth={2} />
        <Navigation className="ml-[15px] size-[17px] text-[#24566a]" strokeWidth={1.8} />
        <svg className="ml-[16px] h-3 w-4" viewBox="0 0 16 12" fill="none" stroke="#222"><rect x=".6" y=".6" width="14.8" height="10.8" rx="1.5" strokeWidth="1.2" /><path d="M3 4h1.200m1.600 0H7m1.600 0h1.200m1.600 0h1.200M3.800 6.500h1.200m1.600 0h1.200m1.600 0h1.200M4 9h8" /></svg>
        <div className="ml-[18px] w-[24px] text-center text-[11.5px] leading-4 tracking-[-0.3px]">FRA<br />FR</div>
        <Wifi className="ml-[19px] size-[15px]" strokeWidth={2.2} />
        <Volume2 className="ml-[9px] size-[15px]" strokeWidth={1.8} />
        <svg className="ml-[9px] h-[14px] w-[18px]" viewBox="0 0 18 14"><path d="M7 3.500h8v8.500H2.500V7" fill="#222" stroke="#222" strokeWidth="1.3" /><path d="M16 6h2v3h-2z" fill="#222" /><path d="M3.500 0 0 5h3l-1 4 4.500-5.500h-3z" fill="#222" stroke="#e3d9d5" strokeWidth=".6" /></svg>
        <div className="ml-[8px] w-[70px] text-right text-[12px] leading-4 tracking-[-0.15px] whitespace-nowrap">11:39<br />26/04/2025</div>
        <svg className="ml-[9px] h-4 w-[14px]" viewBox="0 0 14 16"><path d="M1 12.500V7q0-5 5.500-5T12 7v5.500zM4 14h5l-2.500 2z" fill="#222" /><path d="M10 .8h3.500L10 4h3.500" fill="none" stroke="#222" /><path d="M4.500 6h3.500l-3.500 4h4" fill="none" stroke="#eee" /></svg>
      </div>
    </div>
  );
}

export default function App() {
  return (
    <div className="relative flex h-[1079px] w-[1919px] flex-col overflow-hidden bg-[#0d0d0d] font-['Noto_Sans','Open_Sans',sans-serif]">
      <TopBar />
      <div className="flex">
        <SharedScreen />
        <div className="mt-[480px] ml-1 flex h-[26px] w-[4px] justify-between"><div className="w-px bg-[#aaa]" /><div className="w-px bg-[#aaa]" /></div>
        <div className="mt-[359px] ml-1 flex h-[215px] w-[380px] flex-col justify-end bg-[#222222]">
          <div className="mb-[39px] ml-[142px] flex size-[97px] items-center justify-center rounded-lg bg-[#ed3f7a] text-[52px] text-white">A</div>
          <div className="ml-[1px] flex h-[19px] w-[94px] items-center rounded bg-[#2b2b2b] pl-[3px] text-[12px] text-white">ITAB ACADEMY</div>
        </div>
      </div>
      <RadialMenu />
      <MeetingBar />
      <Taskbar />
    </div>
  );
}
